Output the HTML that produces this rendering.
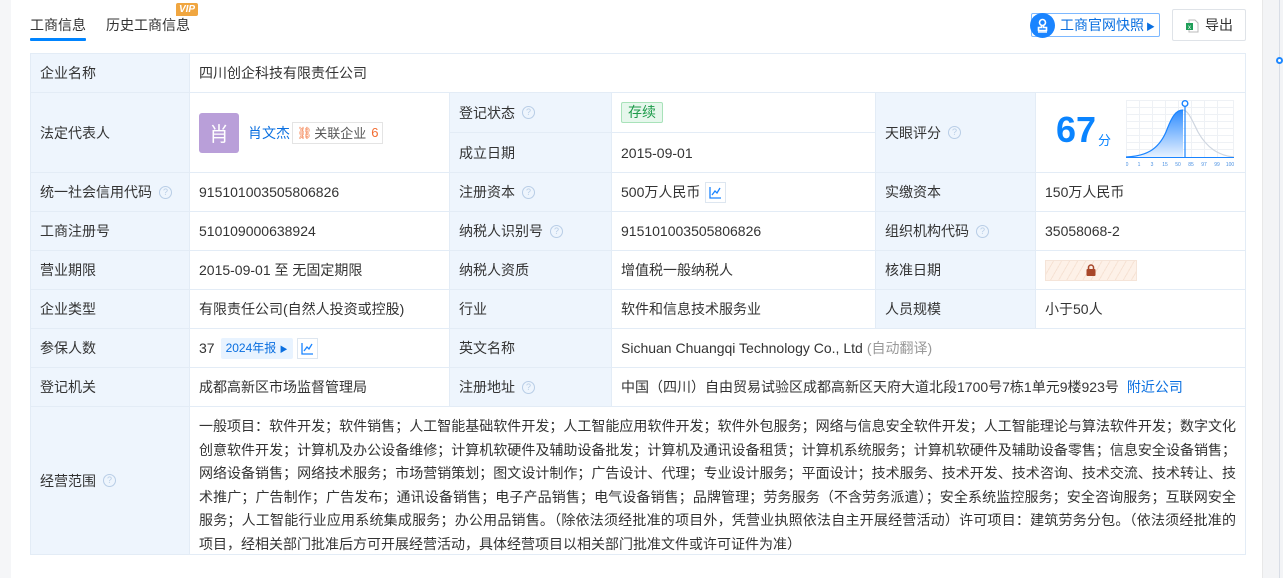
<!DOCTYPE html>
<html><head><meta charset="utf-8">
<style>
*{margin:0;padding:0;box-sizing:border-box}
body{width:1283px;height:578px;overflow:hidden;background:#fff;font-family:"Liberation Sans","Noto Sans CJK SC",sans-serif;font-size:14px;color:#333;position:relative}
.lstrip{position:absolute;left:0;top:0;width:11px;height:578px;background:#f5f6f8}
.rstrip{position:absolute;left:1262px;top:0;width:21px;height:578px;background:#f3f4f6;border-left:1px solid #e8e8e8}
.rstrip i{position:absolute;left:16px;top:0;width:1px;height:578px;background:#d8dde6}
.rstrip b{position:absolute;left:13px;top:57px;width:7px;height:7px;border-radius:50%;border:2px solid #1e88ff;background:#fff}
.tab{position:absolute;top:15px;font-size:14px;color:#333}
.tabline{position:absolute;left:24px;top:38px;width:46px;height:3px;background:#0084ff;border-radius:1px}
.vip{position:absolute;left:176px;top:3px;width:22px;height:13px;background:#f0a640;color:#fff;font-size:10px;font-weight:bold;font-style:italic;text-align:center;line-height:13px;border-radius:2px 2px 2px 0}
.snap{position:absolute;left:1031px;top:13px;width:129px;height:24px;border:1px solid #7db8ff;border-radius:2px;color:#0a6fe0;font-size:14px;line-height:22px;padding-left:28px}
.snap .ic{position:absolute;left:-2px;top:-1px;width:25px;height:25px;border-radius:50%;background:#1a84ff}
.exp{position:absolute;left:1172px;top:9px;width:74px;height:32px;border:1px solid #dfe3e8;border-radius:2px;font-size:14px;line-height:30px;padding-left:32px}
.c{position:absolute;border-right:1px solid #e3ecf6;border-bottom:1px solid #e3ecf6;padding-left:9px;display:flex;align-items:center;white-space:nowrap}
.l{background:#eef5fd}
.q{display:inline-block;width:13px;height:13px;border:1px solid #b8cde6;border-radius:50%;color:#b8cde6;font-size:9px;line-height:11px;text-align:center;margin-left:7px}
.scope{display:block;padding:8px 9px 0 9px;white-space:normal;line-height:23.5px}
.scope div{text-align:justify;text-align-last:justify;white-space:nowrap;overflow:hidden}
.scope div.last{text-align-last:left}
a{color:#0a6fe0;text-decoration:none}
</style></head><body>
<div class="lstrip"></div>
<div class="rstrip"><i></i><b></b></div>
<div class="tab" style="left:30px">工商信息</div>
<div class="tabline" style="left:30px;width:56px"></div>
<div class="tab" style="left:106px">历史工商信息</div>
<div class="vip">VIP</div>
<div class="snap"><span class="ic"><svg width="25" height="25" viewBox="0 0 25 25"><circle cx="12.5" cy="9.5" r="3" fill="none" stroke="#fff" stroke-width="1.6"/><path d="M11.5 12.5v2h-3v3h8v-3h-3v-2" fill="none" stroke="#fff" stroke-width="1.6"/><path d="M8 19h9" stroke="#fff" stroke-width="1.4"/></svg></span>工商官网快照<span style="font-size:9px;margin-left:2px">▶</span></div>
<div class="exp"><svg style="position:absolute;left:12px;top:9px" width="14" height="14" viewBox="0 0 14 14"><path d="M4 1h6l3 3v9H4z" fill="#fff" stroke="#bbb"/><rect x="1" y="4" width="7" height="7" fill="#1f9e58"/><text x="4.5" y="10" font-size="6" fill="#fff" text-anchor="middle" font-family="Liberation Sans">x</text></svg>导出</div>

<div style="position:absolute;left:30px;top:53px;width:1216px;height:502px;border-top:1px solid #e3ecf6;border-left:1px solid #e3ecf6"></div>
<div class="c l" style="left:30px;top:53px;width:160px;height:40px;border-left:1px solid #e3ecf6;border-top:1px solid #e3ecf6">企业名称</div>
<div class="c" style="left:190px;top:53px;width:1056px;height:40px;border-top:1px solid #e3ecf6">四川创企科技有限责任公司</div>
<div class="c l" style="left:30px;top:93px;width:160px;height:80px;border-left:1px solid #e3ecf6">法定代表人</div>
<div class="c" style="left:190px;top:93px;width:260px;height:80px">
<span style="width:40px;height:40px;background:#b99fd9;border-radius:3px;color:#fff;font-size:20px;display:flex;align-items:center;justify-content:center">肖</span>
<a style="margin-left:9px">肖文杰</a>
<span style="margin-left:2px;border:1px solid #e4e4e4;height:22px;padding:0 4px;display:flex;align-items:center;font-size:13px;color:#555"><span style="color:#f26b30;margin-right:2px;font-size:12px">⛓</span>关联企业<span style="color:#f26b30;margin-left:5px">6</span></span></div>
<div class="c l" style="left:450px;top:93px;width:162px;height:40px">登记状态<span class="q">?</span></div>
<div class="c" style="left:612px;top:93px;width:264px;height:40px;align-items:flex-start;padding-top:9px"><span style="background:#e6f7ec;border:1px solid #a8e2b9;color:#1d9b4a;padding:0 6px;line-height:19px;border-radius:2px">存续</span></div>
<div class="c l" style="left:450px;top:133px;width:162px;height:40px">成立日期</div>
<div class="c" style="left:612px;top:133px;width:264px;height:40px">2015-09-01</div>
<div class="c l" style="left:876px;top:93px;width:160px;height:80px">天眼评分<span class="q">?</span></div>
<div class="c" style="left:1036px;top:93px;width:210px;height:80px">
<span style="position:absolute;left:20px;top:16px;font-size:36px;font-weight:bold;color:#0a84ff;font-family:'Liberation Sans',sans-serif">67</span>
<span style="position:absolute;left:62px;top:37px;font-size:13px;color:#0a84ff">分</span>
<svg style="position:absolute;left:90px;top:7px" width="108" height="68" viewBox="0 0 108 68">
<defs><linearGradient id="g" x1="0" y1="0" x2="0" y2="1"><stop offset="0" stop-color="#2e8cff"/><stop offset="1" stop-color="#e6f1ff"/></linearGradient></defs>
<g stroke="#eef1f5" stroke-width="1"><path d="M0 0.5H108M0 7.5H108M0 14.5H108M0 21.5H108M0 28.5H108M0 35.5H108M0 42.5H108M0 49.5H108M0.5 0V57M13.5 0V57M26.5 0V57M39.5 0V57M52.5 0V57M65.5 0V57M78.5 0V57M91.5 0V57M107.5 0V57"/></g>
<path d="M0 57C20 56 32 50 40 32C46 16 50 10 57 10V57Z" fill="url(#g)"/>
<path d="M0 57C20 56 32 50 40 32C46 16 50 10 57 10" fill="none" stroke="#1a84ff" stroke-width="1.2"/>
<path d="M57 10C62 10 66 20 72 32C82 50 95 56 108 57" fill="none" stroke="#cfd6e0" stroke-width="1.2"/>
<path d="M0 57.5H108" stroke="#1a84ff"/>
<path d="M59 4V57" stroke="#1a84ff" stroke-width="1.2"/>
<circle cx="59" cy="3.5" r="2.8" fill="#fff" stroke="#1a84ff" stroke-width="1.4"/>
<g font-size="5" fill="#4a90e2" font-family="Liberation Sans" text-anchor="middle"><text x="1" y="66">0</text><text x="13" y="66">1</text><text x="26" y="66">3</text><text x="39" y="66">15</text><text x="52" y="66">50</text><text x="65" y="66">85</text><text x="78" y="66">97</text><text x="91" y="66">99</text><text x="104" y="66">100</text></g>
</svg></div>
<div class="c l" style="left:30px;top:173px;width:160px;height:39px;border-left:1px solid #e3ecf6">统一社会信用代码<span class="q">?</span></div>
<div class="c" style="left:190px;top:173px;width:260px;height:39px">915101003505806826</div>
<div class="c l" style="left:450px;top:173px;width:162px;height:39px">注册资本<span class="q">?</span></div>
<div class="c" style="left:612px;top:173px;width:264px;height:39px">500万人民币<span style="margin-left:5px;width:21px;height:21px;border:1px solid #dde6f0;display:flex;align-items:center;justify-content:center"><svg width="13" height="13" viewBox="0 0 13 13"><path d="M1 1V12H12M3 9L6 5L8 7L11 2" fill="none" stroke="#1a84ff" stroke-width="1.3"/></svg></span></div>
<div class="c l" style="left:876px;top:173px;width:160px;height:39px">实缴资本</div>
<div class="c" style="left:1036px;top:173px;width:210px;height:39px">150万人民币</div>
<div class="c l" style="left:30px;top:212px;width:160px;height:39px;border-left:1px solid #e3ecf6">工商注册号</div>
<div class="c" style="left:190px;top:212px;width:260px;height:39px">510109000638924</div>
<div class="c l" style="left:450px;top:212px;width:162px;height:39px">纳税人识别号<span class="q">?</span></div>
<div class="c" style="left:612px;top:212px;width:264px;height:39px">915101003505806826</div>
<div class="c l" style="left:876px;top:212px;width:160px;height:39px">组织机构代码<span class="q">?</span></div>
<div class="c" style="left:1036px;top:212px;width:210px;height:39px">35058068-2</div>
<div class="c l" style="left:30px;top:251px;width:160px;height:39px;border-left:1px solid #e3ecf6">营业期限</div>
<div class="c" style="left:190px;top:251px;width:260px;height:39px">2015-09-01 至 无固定期限</div>
<div class="c l" style="left:450px;top:251px;width:162px;height:39px">纳税人资质</div>
<div class="c" style="left:612px;top:251px;width:264px;height:39px">增值税一般纳税人</div>
<div class="c l" style="left:876px;top:251px;width:160px;height:39px">核准日期</div>
<div class="c" style="left:1036px;top:251px;width:210px;height:39px"><span style="width:92px;height:21px;border:1px solid #f5e4d8;background:repeating-linear-gradient(120deg,#fdf1e8 0 6px,#f6e2d4 6px 7px);display:flex;align-items:center;justify-content:center"><svg width="12" height="12" viewBox="0 0 12 12"><path d="M3.5 5V3.5a2.5 2.5 0 0 1 5 0V5" fill="none" stroke="#a8472a" stroke-width="1.5"/><rect x="1.5" y="5" width="9" height="7" rx="1" fill="#a8472a"/></svg></span></div>
<div class="c l" style="left:30px;top:290px;width:160px;height:39px;border-left:1px solid #e3ecf6">企业类型</div>
<div class="c" style="left:190px;top:290px;width:260px;height:39px">有限责任公司(自然人投资或控股)</div>
<div class="c l" style="left:450px;top:290px;width:162px;height:39px">行业</div>
<div class="c" style="left:612px;top:290px;width:264px;height:39px">软件和信息技术服务业</div>
<div class="c l" style="left:876px;top:290px;width:160px;height:39px">人员规模</div>
<div class="c" style="left:1036px;top:290px;width:210px;height:39px">小于50人</div>
<div class="c l" style="left:30px;top:329px;width:160px;height:39px;border-left:1px solid #e3ecf6">参保人数</div>
<div class="c" style="left:190px;top:329px;width:260px;height:39px">37<span style="margin-left:6px;background:#e8f3ff;color:#0a6fe0;font-size:12px;height:21px;line-height:21px;padding:0 5px;border-radius:2px">2024年报 <span style="font-size:8px">▶</span></span><span style="margin-left:4px;width:21px;height:21px;border:1px solid #dde6f0;display:flex;align-items:center;justify-content:center"><svg width="13" height="13" viewBox="0 0 13 13"><path d="M1 1V12H12M3 9L6 5L8 7L11 2" fill="none" stroke="#1a84ff" stroke-width="1.3"/></svg></span></div>
<div class="c l" style="left:450px;top:329px;width:162px;height:39px">英文名称</div>
<div class="c" style="left:612px;top:329px;width:634px;height:39px">Sichuan Chuangqi Technology Co., Ltd<span style="color:#999;margin-left:4px">(自动翻译)</span></div>
<div class="c l" style="left:30px;top:368px;width:160px;height:39px;border-left:1px solid #e3ecf6">登记机关</div>
<div class="c" style="left:190px;top:368px;width:260px;height:39px">成都高新区市场监督管理局</div>
<div class="c l" style="left:450px;top:368px;width:162px;height:39px">注册地址<span class="q">?</span></div>
<div class="c" style="left:612px;top:368px;width:634px;height:39px">中国（四川）自由贸易试验区成都高新区天府大道北段1700号7栋1单元9楼923号<a style="margin-left:8px">附近公司</a></div>
<div class="c l" style="left:30px;top:407px;width:160px;height:148px;border-left:1px solid #e3ecf6">经营范围<span class="q">?</span></div>
<div class="c scope" style="left:190px;top:407px;width:1056px;height:148px">
<div>一般项目：软件开发；软件销售；人工智能基础软件开发；人工智能应用软件开发；软件外包服务；网络与信息安全软件开发；人工智能理论与算法软件开发；数字文化</div>
<div>创意软件开发；计算机及办公设备维修；计算机软硬件及辅助设备批发；计算机及通讯设备租赁；计算机系统服务；计算机软硬件及辅助设备零售；信息安全设备销售；</div>
<div>网络设备销售；网络技术服务；市场营销策划；图文设计制作；广告设计、代理；专业设计服务；平面设计；技术服务、技术开发、技术咨询、技术交流、技术转让、技</div>
<div>术推广；广告制作；广告发布；通讯设备销售；电子产品销售；电气设备销售；品牌管理；劳务服务（不含劳务派遣）；安全系统监控服务；安全咨询服务；互联网安全</div>
<div>服务；人工智能行业应用系统集成服务；办公用品销售。（除依法须经批准的项目外，凭营业执照依法自主开展经营活动）许可项目：建筑劳务分包。（依法须经批准的</div>
<div class="last">项目，经相关部门批准后方可开展经营活动，具体经营项目以相关部门批准文件或许可证件为准）</div>
</div>
</body></html>
